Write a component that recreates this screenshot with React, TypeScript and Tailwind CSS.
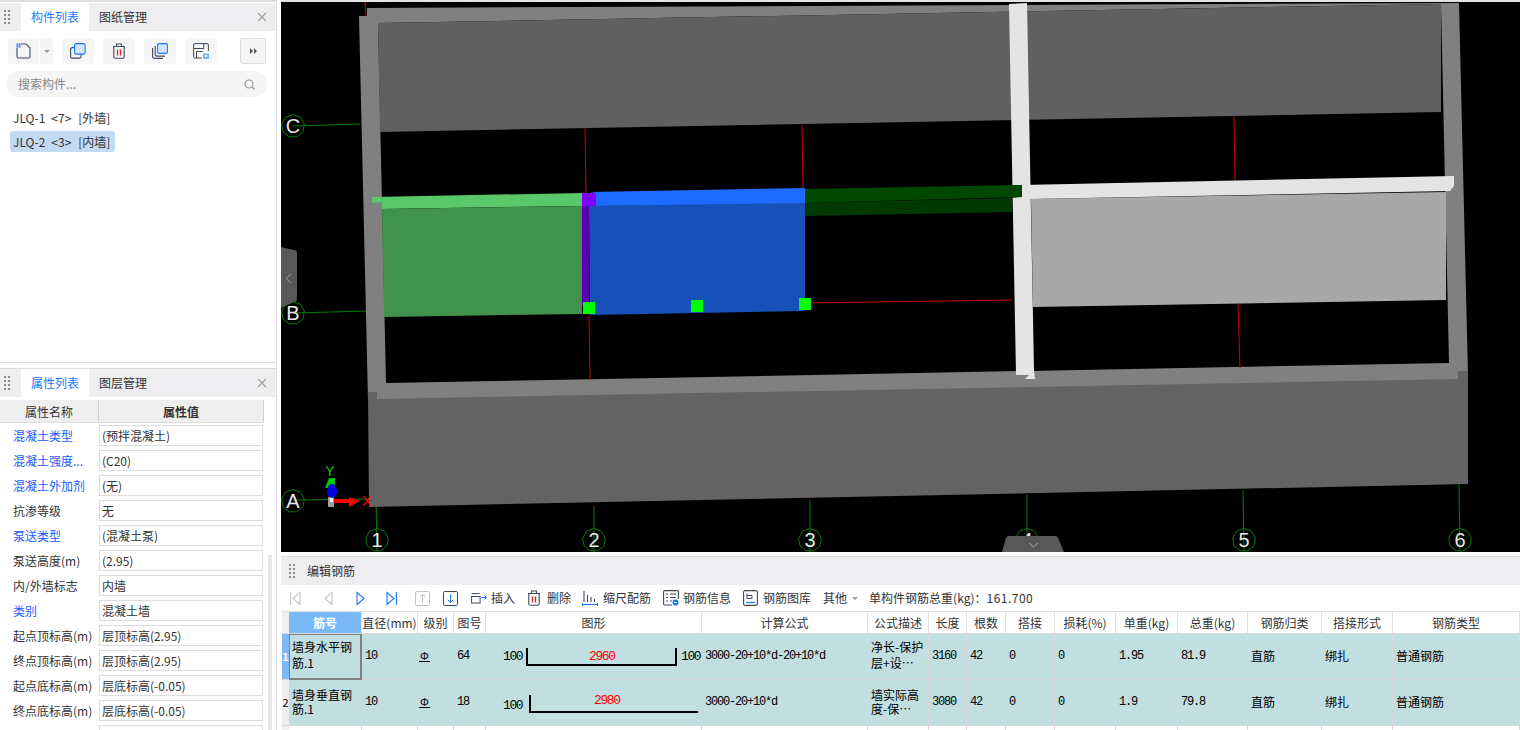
import React from "react";

const rowGrid =
  "grid grid-cols-[7px_73px_56px_36px_32px_216px_166px_61px_38px_39px_49px_61px_62px_70px_74px_71px_127px]";
const numberCell = "font-['Liberation_Mono',monospace] text-[12px] tracking-[-1.2px] text-black pb-[2px]";

const headers = [
  "筋号", "直径(mm)", "级别", "图号", "图形", "计算公式", "公式描述", "长度", "根数",
  "搭接", "损耗(%)", "单重(kg)", "总重(kg)", "钢筋归类", "搭接形式", "钢筋类型",
];

const properties = [
  { name: "混凝土类型", value: "(预拌混凝土)", link: true },
  { name: "混凝土强度...", value: "(C20)", link: true },
  { name: "混凝土外加剂", value: "(无)", link: true },
  { name: "抗渗等级", value: "无" },
  { name: "泵送类型", value: "(混凝土泵)", link: true },
  { name: "泵送高度(m)", value: "(2.95)" },
  { name: "内/外墙标志", value: "内墙" },
  { name: "类别", value: "混凝土墙", link: true },
  { name: "起点顶标高(m)", value: "层顶标高(2.95)" },
  { name: "终点顶标高(m)", value: "层顶标高(2.95)" },
  { name: "起点底标高(m)", value: "层底标高(-0.05)" },
  { name: "终点底标高(m)", value: "层底标高(-0.05)" },
  { name: "", value: "" },
];

const rebars = [
  {
    id: "1", name: ["墙身水平钢", "筋.1"], shapeNo: "64", formula: "3000-20+10*d-20+10*d",
    desc: ["净长-保护", "层+设…"], length: "3160", unit: "1.95", total: "81.9",
  },
  {
    id: "2", name: ["墙身垂直钢", "筋.1"], shapeNo: "18", formula: "3000-20+10*d",
    desc: ["墙实际高", "度-保…"], length: "3080", unit: "1.9", total: "79.8",
  },
];

const axisBubbles = [
  { label: "C", x: 293, y: 126 },
  { label: "B", x: 293, y: 313 },
  { label: "A", x: 293, y: 501 },
  { label: "1", x: 377, y: 540 },
  { label: "2", x: 594, y: 540 },
  { label: "3", x: 810, y: 540 },
  { label: "4", x: 1027, y: 540 },
  { label: "5", x: 1244, y: 540 },
  { label: "6", x: 1460, y: 540 },
];

function bubblePoints(cx: number, cy: number) {
  return Array.from({ length: 9 }, (_, i) => {
    const a = (i / 9) * Math.PI * 2 - Math.PI / 2;
    return `${cx + Math.cos(a) * 11.5},${cy + Math.sin(a) * 11.5}`;
  }).join(" ");
}

function Grip() {
  return (
    <svg width="6" height="14" viewBox="0 0 6 14" className="shrink-0 fill-[#8a8a8a]">
      <rect x="0" y="0" width="2" height="2" />
      <rect x="4" y="0" width="2" height="2" />
      <rect x="0" y="4" width="2" height="2" />
      <rect x="4" y="4" width="2" height="2" />
      <rect x="0" y="8" width="2" height="2" />
      <rect x="4" y="8" width="2" height="2" />
      <rect x="0" y="12" width="2" height="2" />
      <rect x="4" y="12" width="2" height="2" />
    </svg>
  );
}

function CloseIcon() {
  return (
    <svg width="10" height="10" viewBox="0 0 10 10" className="stroke-[#a0a0a0]" fill="none" strokeWidth="1.2">
      <path d="M1 1l8 8M9 1l-8 8" />
    </svg>
  );
}

function PanelHeader({ tabs }: { tabs: [string, string] }) {
  return (
    <div className="flex h-[28px] items-center bg-[#eeeef0]">
      <div className="ml-[4px] mr-[11px] flex items-center">
        <Grip />
      </div>
      <div className="flex h-full w-[68px] items-center justify-center bg-white text-[12px] text-[#1677ff]">{tabs[0]}</div>
      <div className="ml-[10px] text-[12px] text-[#333]">{tabs[1]}</div>
      <div className="ml-auto mr-[9px] flex items-center">
        <CloseIcon />
      </div>
    </div>
  );
}

function NewIcon() {
  return (
    <svg width="16" height="16" viewBox="0 0 16 16" fill="none">
      <path d="M1 5v8.5a1.5 1.5 0 0 0 1.5 1.5h10a1.5 1.5 0 0 0 1.5-1.5V5l-4-4H5" stroke="#3d4a5c" strokeWidth="1.1" />
      <rect x="0.5" y="0.5" width="4" height="4" fill="#3b7de0" />
      <path d="M2.5 .5v4M.5 2.5h4" stroke="#cfe0f8" strokeWidth=".6" />
    </svg>
  );
}

function CopyIcon() {
  return (
    <svg width="16" height="16" viewBox="0 0 16 16" fill="none">
      <rect x="0.6" y="4.6" width="10.5" height="10.5" rx="1.6" stroke="#3d4a5c" strokeWidth="1.1" />
      <rect x="4.6" y="0.6" width="10.5" height="10.5" rx="1.6" fill="#d6e6fa" stroke="#1677ff" strokeWidth="1.1" />
    </svg>
  );
}

function TrashIcon() {
  return (
    <svg width="14" height="16" viewBox="0 0 14 16" fill="none">
      <path d="M1 3.500h12M4.500 3.500V1h5v2.500" stroke="#3d4a5c" strokeWidth="1.1" />
      <path d="M1.800 3.500v10.200a1.600 1.600 0 0 0 1.600 1.600h7.200a1.600 1.600 0 0 0 1.600-1.600V3.500" stroke="#3d4a5c" strokeWidth="1.1" />
      <path d="M5.500 6.500v6M8.500 6.500v6" stroke="#e8202a" strokeWidth="1.3" />
    </svg>
  );
}

function CopiesIcon() {
  return (
    <svg width="16" height="16" viewBox="0 0 16 16" fill="none">
      <path d="M.6 5v8.600a1.800 1.800 0 0 0 1.800 1.800H11" stroke="#3d4a5c" strokeWidth="1.1" />
      <path d="M3.200 3v8.500a1.600 1.600 0 0 0 1.600 1.600H13" stroke="#3d4a5c" strokeWidth="1.1" />
      <rect x="5.600" y="0.600" width="9.800" height="9.800" rx="1.400" fill="#d6e6fa" stroke="#1677ff" strokeWidth="1.1" />
    </svg>
  );
}

function SaveAsIcon() {
  return (
    <svg width="16" height="16" viewBox="0 0 16 16" fill="none">
      <path d="M9 15H2a1.400 1.400 0 0 1-1.400-1.400V2A1.400 1.400 0 0 1 2 .6h12A1.400 1.400 0 0 1 15.400 2v6" stroke="#3d4a5c" strokeWidth="1" />
      <path d="M.8 5.500h10M3.500 15V8.500h6" stroke="#3d4a5c" strokeWidth="1" />
      <path d="M10.800 .8v4.700" stroke="#3d4a5c" strokeWidth="1" />
      <rect x="10" y="10.500" width="6" height="5.500" fill="#7fb2f2" />
      <rect x="12" y="12" width="2" height="2" fill="#fff" />
    </svg>
  );
}

function InsertIcon() {
  return (
    <svg width="16" height="11" viewBox="0 0 16 11" fill="none">
      <path d="M.6 .6h8" stroke="#3d4a5c" strokeWidth="1" />
      <rect x="0.600" y="3.500" width="8.500" height="6.500" stroke="#3d4a5c" strokeWidth="1" />
      <path d="M10.500 4.500h5M13.500 2.500l2 2-2 2" stroke="#1677ff" strokeWidth="1" />
    </svg>
  );
}

function ScaleIcon() {
  return (
    <svg width="16" height="16" viewBox="0 0 16 16" fill="none">
      <path d="M2 1v11M5.500 5v7M9 7v5M12.500 9v3" stroke="#3d4a5c" strokeWidth="1.1" />
      <path d="M.5 14.500h15M.5 13v3M15.500 13v3" stroke="#1677ff" strokeWidth="1" />
    </svg>
  );
}

function InfoIcon() {
  return (
    <svg width="16" height="16" viewBox="0 0 16 16" fill="none">
      <path d="M9 15H1.800A1.200 1.200 0 0 1 .6 13.800V1.800A1.200 1.200 0 0 1 1.800.6h12.400a1.200 1.200 0 0 1 1.200 1.200V9" stroke="#3d4a5c" strokeWidth="1.1" />
      <path d="M3 4h2M7 4h6M3 7.500h2M7 7.500h6M3 11h2M7 11h2" stroke="#3d4a5c" strokeWidth="1" />
      <circle cx="12.500" cy="12.500" r="3" fill="#1677ff" />
      <path d="M11 12.500h3" stroke="#fff" strokeWidth="1" />
    </svg>
  );
}

function LibraryIcon() {
  return (
    <svg width="15" height="16" viewBox="0 0 15 16" fill="none">
      <rect x="0.600" y="0.600" width="13.800" height="14.800" rx="1.500" stroke="#3d4a5c" strokeWidth="1.1" />
      <path d="M4 3.500v5h5V5.500H4" stroke="#3d4a5c" strokeWidth="1" />
      <path d="M3 12.500h9" stroke="#1677ff" strokeWidth="1.200" />
    </svg>
  );
}

function NavIcon({ kind, active }: { kind: "first" | "prev" | "next" | "last"; active?: boolean }) {
  const stroke = active ? "#1677ff" : "#c4c4c4";
  return (
    <svg width="11" height="15" viewBox="0 0 11 15" fill="none" stroke={stroke} strokeWidth="1.100">
      {kind === "first" && <path d="M.6 1v13M10 1.500v12L3 7.500z" />}
      {kind === "prev" && <path d="M9 1.500v12L2 7.500z" />}
      {kind === "next" && <path d="M2 1.500v12l7-6z" />}
      {kind === "last" && <path d="M1 1.500v12l7-6zM10.400 1v13" />}
    </svg>
  );
}

function MoveIcon({ up }: { up?: boolean }) {
  const box = up ? "#c4c4c4" : "#3d4a5c";
  const arrow = up ? "#c4c4c4" : "#1677ff";
  return (
    <svg width="15" height="15" viewBox="0 0 15 15" fill="none">
      <rect x="0.500" y="0.500" width="14" height="14" rx="1.200" stroke={box} />
      <path d={up ? "M7.500 11.500V3.500M4.800 6.200l2.700-2.700 2.700 2.700" : "M7.500 3.500v8M4.800 8.800l2.700 2.700 2.700-2.700"} stroke={arrow} />
    </svg>
  );
}

function ToolButton({ children, className = "" }: { children: React.ReactNode; className?: string }) {
  return (
    <div className={`flex h-[26px] w-[32px] items-center justify-center rounded-[3px] bg-[#f5f5f5] ${className}`}>
      {children}
    </div>
  );
}

function ListItem({ code, count, kind, selected }: { code: string; count: string; kind: string; selected?: boolean }) {
  return (
    <div className={`flex rounded-[3px] pl-[3px] pr-[5px] ${selected ? "bg-[#c2daf2]" : ""}`}>
      <span>{code}</span>
      <span className="ml-[6px]">{count}</span>
      <span className="ml-[7px]">{kind}</span>
    </div>
  );
}

function ComponentPanel() {
  return (
    <section className="h-[361px] border-b border-[#ddd] pt-[1px]">
      <PanelHeader tabs={["构件列表", "图纸管理"]} />
      <div className="flex items-center px-[8px] pt-[7px]">
        <div className="flex h-[26px] w-[45px] items-center rounded-[3px] bg-[#f5f5f5]">
          <div className="flex h-full w-[32px] items-center justify-center border-r border-white">
            <NewIcon />
          </div>
          <div className="ml-[4px] h-0 w-0 border-x-[3px] border-t-[3px] border-x-transparent border-t-[#999]" />
        </div>
        <ToolButton className="ml-[9px]"><CopyIcon /></ToolButton>
        <ToolButton className="ml-[9px]"><TrashIcon /></ToolButton>
        <ToolButton className="ml-[9px]"><CopiesIcon /></ToolButton>
        <ToolButton className="ml-[9px]"><SaveAsIcon /></ToolButton>
        <div className="ml-[23px] flex h-[26px] w-[26px] items-center justify-center rounded-[3px] border border-[#ddd] bg-[#f5f5f5]">
          <svg width="7" height="6" viewBox="0 0 7 6" className="fill-[#555]">
            <path d="M0 0l3 3-3 3zM4 0l3 3-3 3z" />
          </svg>
        </div>
      </div>
      <div className="ml-[6px] mr-[9px] mt-[7px] flex h-[26px] items-center rounded-full bg-[#f5f5f5] pl-[12px] pr-[12px]">
        <span className="text-[12px] text-[#888]">搜索构件...</span>
        <svg width="11" height="11" viewBox="0 0 11 11" fill="none" className="ml-auto stroke-[#999]" strokeWidth="1.200">
          <circle cx="5" cy="5" r="4" />
          <path d="M8 8l2.500 2.500" />
        </svg>
      </div>
      <div className="mt-[10px] flex flex-col items-start gap-[3px] pl-[10px] text-[12px] leading-[21px] text-[#333]">
        <ListItem code="JLQ-1" count="<7>" kind="[外墙]" />
        <ListItem code="JLQ-2" count="<3>" kind="[内墙]" selected />
      </div>
    </section>
  );
}

function PropertyPanel() {
  return (
    <section className="relative mt-[5px] flex-1 overflow-hidden border-t border-[#ddd]">
      <PanelHeader tabs={["属性列表", "图层管理"]} />
      <div className="mt-[3px] flex h-[23px] w-[264px] border-b border-[#ddd] bg-[#eeeeee] text-[12px] leading-[23px] text-[#333]">
        <div className="w-[99px] border-r border-[#d4d4d4] text-center">属性名称</div>
        <div className="flex-1 border-r border-[#d4d4d4] text-center font-bold">属性值</div>
      </div>
      <div className="mt-[2px] flex flex-col gap-[4px]">
        {properties.map((p, i) => (
          <div key={i} className="flex h-[21px] items-center text-[12px]">
            <div className={`w-[99px] truncate pl-[13px] ${p.link ? "text-[#1a5cff]" : "text-[#333]"}`}>{p.name}</div>
            <div className="flex h-[21px] w-[164px] items-center border border-[#ddd] pl-[2px] text-[#333]">{p.value}</div>
          </div>
        ))}
      </div>
      <div className="absolute left-[268px] top-[186px] h-[180px] w-[4px] bg-[#e6e6e6]" />
    </section>
  );
}

function ModelView() {
  return (
    <svg viewBox="281 2 1239 550" className="block h-[550px] w-[1239px] bg-black">
      {/* green grid lines */}
      <g stroke="#008000" strokeWidth="1" fill="none">
        <path d="M293 126l67-2M293 313l74-2M293 500l83-1l1 52M594 506v46M810 500v52M1027 495v50M1243 490l1 61M1459 484l1 67" />
      </g>

      {/* outer wall ring */}
      <polygon points="359,16 367,16 367,8 1459,3 1468,375 1468,400 368,400" fill="#808080" />
      <polygon points="378,23 1441,4 1449,363 386,383" fill="#000" />
      {/* red axis lines inside the ring */}
      <path
        d="M365 2l1 14M585 128l1 66M589 315l1 65M802 125l1 64M805 303l207-3M1234 116l1 66M1238 304l2 64"
        stroke="#d00000"
        fill="none"
      />
      <polygon points="378,23 1441,4 1441,112 380,132" fill="#606060" />
      <polygon points="368,392 377,392 377,399 1458,379 1458,371 1468,371 1468,484 369,507" fill="#636363" />

      {/* wall currently selected and its neighbour */}
      <polygon points="372,197 582,193 582,206 382,209 382,202 372,203" fill="#5ac86a" />
      <polygon points="382,209 582,206 582,314 384,317" fill="#41924b" />
      <polygon points="589,206 805,202 805,311 590,315" fill="#1650b8" />
      <polygon points="589,192 805,188 805,203 596,206 596,193" fill="#1e6cff" />
      <polygon points="582,206 589,206 589,306 582,306" fill="#5b00b5" />
      <polygon points="582,193 596,193 596,206 582,206" fill="#8000ff" />

      {/* dark green wall running behind the cross wall */}
      <polygon points="805,189 1022,185 1022,197 805,203" fill="#004800" />
      <polygon points="805,203 1012,198 1012,212 805,216" fill="#003a00" />

      {/* light grey walls */}
      <polygon points="1031,199 1446,192 1446,300 1033,307" fill="#a8a8a8" />
      <polygon points="1009,4 1027,3 1034,370 1035,379 1025,379 1029,375 1016,375" fill="#e4e4e4" />
      <polygon points="1022,185 1454,176 1454,186 1450,191 1031,199 1022,199" fill="#e4e4e4" />
      <polygon points="1012,185 1022,185 1022,197 1012,198" fill="#004800" />

      {/* grip points */}
      <g fill="#00ff00">
        <rect x="583" y="302" width="12" height="12" />
        <rect x="691" y="300" width="12" height="12" />
        <rect x="799" y="298" width="12" height="12" />
      </g>

      {/* axis bubbles */}
      {axisBubbles.map((b) => (
        <g key={b.label}>
          <polygon points={bubblePoints(b.x, b.y)} fill="none" stroke="#0a7a0a" strokeWidth="1" />
          <text
            x={b.x}
            y={b.y + 7}
            textAnchor="middle"
            fontSize="20"
            fill="#e8e8e8"
            fontFamily="'Liberation Sans', sans-serif"
          >
            {b.label}
          </text>
        </g>
      ))}

      {/* origin gizmo */}
      <rect x="328" y="497" width="6" height="10" fill="#a0a0a0" />
      <rect x="330" y="497" width="3" height="5" fill="#eee" />
      <polygon points="329,478 335,478 335,488 325,488" fill="#00c800" />
      <ellipse cx="332" cy="491" rx="5" ry="7" fill="#0000e0" />
      <rect x="334" y="499" width="16" height="4" fill="#ff0000" />
      <polygon points="349,497 360,501 349,507" fill="#ff0000" />
      <text x="330" y="476" textAnchor="middle" fontSize="14" fill="#00c800" fontFamily="'Liberation Sans', sans-serif">Y</text>
      <text x="367" y="506" textAnchor="middle" fontSize="15" fill="#ff0000" fontFamily="'Liberation Sans', sans-serif">X</text>

      {/* collapse handles */}
      <path d="M281 247l13 3a3 3 0 0 1 3 3v46a3 3 0 0 1-3 3l-13 6z" fill="#585858" />
      <path d="M291 274l-5 4.500 5 4.500" stroke="#a0a0a0" fill="none" />
      <path d="M1002 552l4-14a3 3 0 0 1 3-2h46a3 3 0 0 1 3 2l6 14z" fill="#585858" />
      <path d="M1029 543l4.500 4 4.500-4" stroke="#a0a0a0" fill="none" />
    </svg>
  );
}

function BarShape({ first }: { first: boolean }) {
  return (
    <svg width="216" height="45" viewBox="0 0 216 45" className="block">
      <g fontFamily="'Liberation Mono', monospace" fontSize="13" letterSpacing="-1.400">
        {first ? (
          <>
            <text x="17" y="26">100</text>
            <text x="195" y="26">100</text>
            <text x="103" y="26" fill="#ff0000">2960</text>
            <path d="M41 14v17h149V14" fill="none" stroke="#000" strokeWidth="2" />
          </>
        ) : (
          <>
            <text x="17" y="29">100</text>
            <text x="108" y="24" fill="#ff0000">2980</text>
            <path d="M44 15v17h168" fill="none" stroke="#000" strokeWidth="2" />
          </>
        )}
      </g>
    </svg>
  );
}

function RebarRow({ rebar, first }: { rebar: (typeof rebars)[number]; first: boolean }) {
  const cell = "flex items-center border-r border-b border-[#d8d8d8] pl-[3px]";
  const lines = first ? "leading-[16px] pb-[4px]" : "leading-[14px] pb-[2px]";
  // the focused name cell carries a heavier grey frame
  const nameCell = first
    ? "flex items-center border-x border-t border-[#808080] border-r-2 border-b-2 pl-[2px]"
    : cell;
  return (
    <div className={`${rowGrid} h-[46px] bg-[#c1dee0] text-[12px] text-black`}>
      <div
        className={`flex items-center justify-center border-b border-[#d8d8d8] text-[11px] ${first ? "bg-[#7fb8f8] font-bold text-white" : "bg-[#eeeeee]"}`}
      >
        {rebar.id}
      </div>
      <div className={`${nameCell} ${lines}`}>
        <div>
          <div>{rebar.name[0]}</div>
          <div>{rebar.name[1]}</div>
        </div>
      </div>
      <div className={`${cell} ${numberCell}`}>10</div>
      <div className="flex items-center border-r border-b border-[#d8d8d8] pb-[2px] pl-[1px] text-[11px]">
        <span className="border-b border-black px-[1px] leading-[11px]">Φ</span>
      </div>
      <div className={`${cell} ${numberCell}`}>{rebar.shapeNo}</div>
      <div className="border-r border-b border-[#d8d8d8]">
        <BarShape first={first} />
      </div>
      <div className={`${cell} ${numberCell}`}>{rebar.formula}</div>
      <div className={`${cell} ${lines}`}>
        <div>
          <div>{rebar.desc[0]}</div>
          <div>{rebar.desc[1]}</div>
        </div>
      </div>
      <div className={`${cell} ${numberCell}`}>{rebar.length}</div>
      <div className={`${cell} ${numberCell}`}>42</div>
      <div className={`${cell} ${numberCell}`}>0</div>
      <div className={`${cell} ${numberCell}`}>0</div>
      <div className={`${cell} ${numberCell}`}>{rebar.unit}</div>
      <div className={`${cell} ${numberCell}`}>{rebar.total}</div>
      <div className={`${cell} pb-[2px]`}>直筋</div>
      <div className={`${cell} pb-[2px]`}>绑扎</div>
      <div className={`${cell} pb-[2px]`}>普通钢筋</div>
    </div>
  );
}

function RebarPanel() {
  return (
    <section className="mt-[4px] flex-1 overflow-hidden border-t border-[#ddd]">
      <div className="flex h-[28px] items-center bg-[#eeeef0] pl-[8px] text-[12px] text-[#333]">
        <Grip />
        <span className="ml-[12px]">编辑钢筋</span>
      </div>
      <div className="flex h-[27px] items-center border-b border-[#ddd] pl-[9px] text-[12px] text-[#333]">
        <NavIcon kind="first" />
        <div className="ml-[22px]"><NavIcon kind="prev" /></div>
        <div className="ml-[21px]"><NavIcon kind="next" active /></div>
        <div className="ml-[20px]"><NavIcon kind="last" active /></div>
        <div className="ml-[18px]"><MoveIcon up /></div>
        <div className="ml-[13px]"><MoveIcon /></div>
        <div className="ml-[13px]"><InsertIcon /></div>
        <span className="ml-[4px]">插入</span>
        <div className="ml-[12px]"><TrashIcon /></div>
        <span className="ml-[6px]">删除</span>
        <div className="ml-[11px]"><ScaleIcon /></div>
        <span className="ml-[5px]">缩尺配筋</span>
        <div className="ml-[12px]"><InfoIcon /></div>
        <span className="ml-[4px]">钢筋信息</span>
        <div className="ml-[12px]"><LibraryIcon /></div>
        <span className="ml-[5px]">钢筋图库</span>
        <span className="ml-[12px]">其他</span>
        <div className="ml-[5px] h-0 w-0 border-x-[3px] border-t-[3px] border-x-transparent border-t-[#999]" />
        <span className="ml-[11px]">单构件钢筋总重(kg)：<span className="tracking-[0.5px]">161.700</span></span>
      </div>
      <div className="ml-[1px]">
        <div className={`${rowGrid} h-[22px] border-b border-[#d8d8d8] bg-white text-[12px] leading-[21px] text-[#333]`}>
          <div className="bg-[#f0f0f0]" />
          {headers.map((h, i) => (
            <div
              key={h}
              className={`whitespace-nowrap border-r border-[#e2e2e2] text-center ${i === 0 ? "bg-[#7ab8f8] font-bold text-white" : ""}`}
            >
              {h}
            </div>
          ))}
        </div>
        {rebars.map((r, i) => (
          <RebarRow key={r.id} rebar={r} first={i === 0} />
        ))}
        <div className={`${rowGrid} h-[6px]`}>
          <div className="bg-[#f0f0f0]" />
          {headers.map((h) => (
            <div key={h} className="border-r border-[#d8d8d8]" />
          ))}
        </div>
      </div>
    </section>
  );
}

export default function App() {
  return (
    <div className="flex h-[730px] w-[1520px] overflow-hidden bg-white font-['Noto_Sans_CJK_SC','Liberation_Sans',sans-serif]">
      <aside className="flex h-full w-[277px] shrink-0 flex-col border-t-[2px] border-r border-[#ddd]">
        <ComponentPanel />
        <PropertyPanel />
      </aside>
      <main className="ml-[4px] flex h-full flex-1 flex-col border-t-[2px] border-[#e4e4e4]">
        <ModelView />
        <RebarPanel />
      </main>
    </div>
  );
}
